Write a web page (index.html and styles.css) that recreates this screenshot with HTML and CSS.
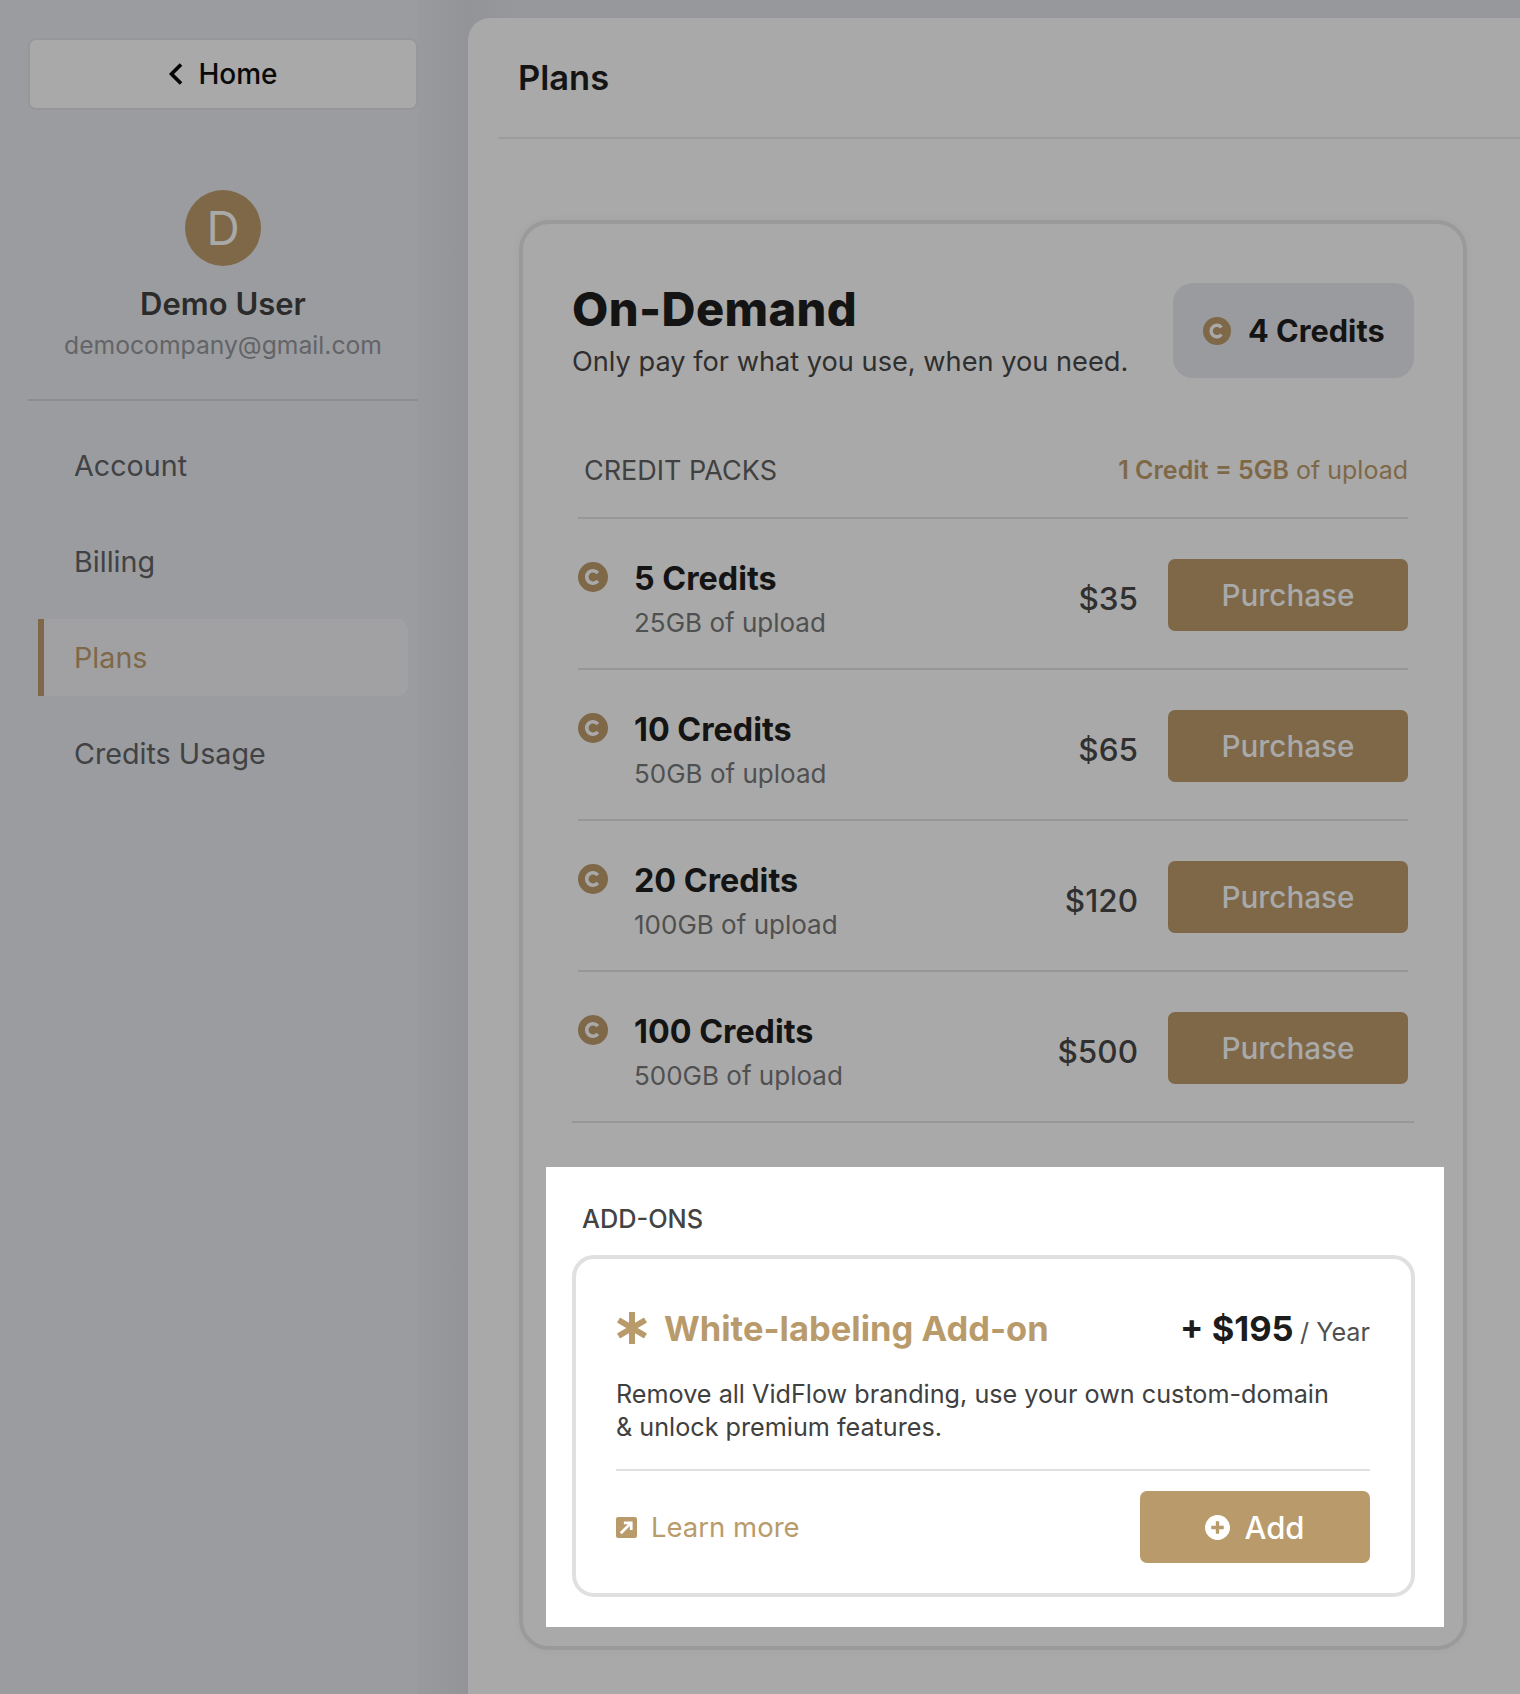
FILE: index.html
```html
<!DOCTYPE html>
<html lang="en">
<head>
    <meta charset="UTF-8">
    <title>Plans</title>
    <link rel="stylesheet" href="styles.css">
</head>
<body>
    <div class="app">
        <aside class="sidebar">
            <a class="home-btn">
                <svg width="16" height="24" viewBox="0 0 16 24"><path d="M13 2.500 3.500 12l9.500 9.500" fill="none" stroke="#050505" stroke-width="3.600"/></svg>
                Home
            </a>
            <div class="profile">
                <div class="avatar">D</div>
                <div class="profile-name">Demo User</div>
                <div class="profile-email">democompany@gmail.com</div>
            </div>
            <nav class="nav">
                <a class="nav-item">Account</a>
                <a class="nav-item">Billing</a>
                <a class="nav-item active">Plans</a>
                <a class="nav-item">Credits Usage</a>
            </nav>
        </aside>

        <main class="panel">
            <div class="panel-head"><h2>Plans</h2></div>
            <section class="card">
                <div class="card-head">
                    <div>
                        <h1>On-Demand</h1>
                        <p>Only pay for what you use, when you need.</p>
                    </div>
                    <div class="balance">
                        <svg class="coin" width="28" height="28" viewBox="0 0 30 30"><circle cx="15" cy="15" r="15" fill="#7e6848"/><path d="M19.800 11.200a6.200 6.200 0 1 0 0 7.600" fill="none" stroke="#a9a9a9" stroke-width="3.600"/></svg>
                        <span>4 Credits</span>
                    </div>
                </div>

                <div class="packs">
                    <div class="packs-head">
                        <span class="packs-label">CREDIT PACKS</span>
                        <span class="packs-rate"><b>1 Credit = 5GB</b> of upload</span>
                    </div>
                    <div class="pack">
                        <svg class="coin" width="30" height="30" viewBox="0 0 30 30"><circle cx="15" cy="15" r="15" fill="#7e6848"/><path d="M19.800 11.200a6.200 6.200 0 1 0 0 7.600" fill="none" stroke="#a9a9a9" stroke-width="3.600"/></svg>
                        <div class="pack-info">
                            <div class="pack-name">5 Credits</div>
                            <div class="pack-sub">25GB of upload</div>
                        </div>
                        <div class="pack-price">$35</div>
                        <button class="buy">Purchase</button>
                    </div>
                    <div class="pack">
                        <svg class="coin" width="30" height="30" viewBox="0 0 30 30"><circle cx="15" cy="15" r="15" fill="#7e6848"/><path d="M19.800 11.200a6.200 6.200 0 1 0 0 7.600" fill="none" stroke="#a9a9a9" stroke-width="3.600"/></svg>
                        <div class="pack-info">
                            <div class="pack-name">10 Credits</div>
                            <div class="pack-sub">50GB of upload</div>
                        </div>
                        <div class="pack-price">$65</div>
                        <button class="buy">Purchase</button>
                    </div>
                    <div class="pack">
                        <svg class="coin" width="30" height="30" viewBox="0 0 30 30"><circle cx="15" cy="15" r="15" fill="#7e6848"/><path d="M19.800 11.200a6.200 6.200 0 1 0 0 7.600" fill="none" stroke="#a9a9a9" stroke-width="3.600"/></svg>
                        <div class="pack-info">
                            <div class="pack-name">20 Credits</div>
                            <div class="pack-sub">100GB of upload</div>
                        </div>
                        <div class="pack-price">$120</div>
                        <button class="buy">Purchase</button>
                    </div>
                    <div class="pack last">
                        <svg class="coin" width="30" height="30" viewBox="0 0 30 30"><circle cx="15" cy="15" r="15" fill="#7e6848"/><path d="M19.800 11.200a6.200 6.200 0 1 0 0 7.600" fill="none" stroke="#a9a9a9" stroke-width="3.600"/></svg>
                        <div class="pack-info">
                            <div class="pack-name">100 Credits</div>
                            <div class="pack-sub">500GB of upload</div>
                        </div>
                        <div class="pack-price">$500</div>
                        <button class="buy">Purchase</button>
                    </div>
                </div>

                <div class="addons">
                    <div class="addons-label">ADD-ONS</div>
                    <div class="addon">
                        <div class="addon-head">
                            <svg width="32" height="32" viewBox="0 0 32 32"><path d="M16 0v32M2.500 8l27 16M29.500 8l-27 16" fill="none" stroke="#b99b6b" stroke-width="6"/></svg>
                            <h3>White-labeling Add-on</h3>
                            <div class="addon-price"><b>+ $195</b> <span>/ Year</span></div>
                        </div>
                        <p class="addon-desc">Remove all VidFlow branding, use your own custom-domain<br>&amp; unlock premium features.</p>
                        <div class="addon-foot">
                            <a class="learn">
                                <svg width="21" height="21" viewBox="0 0 20 20"><rect width="20" height="20" rx="2" fill="#b99b6b"/><path d="M4.500 15.500 13 7M7.500 5.500h7V12.500" fill="none" stroke="#fff" stroke-width="2.600"/></svg>
                                Learn more
                            </a>
                            <button class="add">
                                <svg width="25" height="25" viewBox="0 0 24 24"><circle cx="12" cy="12" r="12" fill="#fff"/><path d="M12 6v12M6 12h12" stroke="#b99b6b" stroke-width="3.200"/></svg>
                                Add
                            </button>
                        </div>
                    </div>
                </div>
            </section>
        </main>
    </div>
</body>
</html>
```

FILE: styles.css
```css
/* page */
* {
    box-sizing: border-box;
}

body {
    margin: 0;
    height: 1694px;
    overflow: hidden;
    font-family: "Inter", "Liberation Sans", sans-serif;
    color: #141414;
}

.app {
    display: flex;
    height: 1694px;
    background: linear-gradient(90deg, #999a9d 418px, #939497 468px, #97989c 520px);
}

/* sidebar */
.sidebar {
    flex: 0 0 418px;
    margin-right: 50px;
    padding: 38px 0 0 28px;
    background: #9b9c9f;
}

.home-btn {
    display: flex;
    align-items: center;
    justify-content: center;
    gap: 14px;
    width: 390px;
    height: 72px;
    background: #a9a9a9;
    border: 2px solid #97979a;
    border-radius: 8px;
    font-size: 28px;
    font-weight: 500;
    color: #0a0a0a;
}

.profile {
    display: flex;
    flex-direction: column;
    align-items: center;
    height: 291px;
    padding-top: 80px;
    border-bottom: 2px solid #8b8c8f;
}

.avatar {
    display: flex;
    align-items: center;
    justify-content: center;
    width: 76px;
    height: 76px;
    border-radius: 50%;
    background: #7e6848;
    color: #a9a9a9;
    font-size: 46px;
}

.profile-name {
    margin-top: 19px;
    font-size: 31px;
    font-weight: 600;
    color: #2b2b2b;
}

.profile-email {
    margin-top: 8px;
    font-size: 24.700px;
    color: #636467;
}

.nav {
    display: flex;
    flex-direction: column;
    gap: 19px;
    margin-top: 26px;
    margin-left: 10px;
    width: 370px;
}

.nav-item {
    height: 77px;
    line-height: 77px;
    padding-left: 30px;
    font-size: 28.700px;
    color: #414244;
    border-left: 6px solid transparent;
}

.nav-item.active {
    color: #7e6848;
    background: #a1a1a3;
    border-left-color: #7e6848;
    border-radius: 0 10px 10px 0;
}

/* main panel */
.panel {
    flex: 1;
    min-width: 0;
    margin-top: 18px;
    padding-left: 30px;
    background: #a9a9a9;
    border-top-left-radius: 22px;
}

.panel-head {
    height: 121px;
    padding: 38px 0 0 20px;
    border-bottom: 2px solid #9d9d9d;
}

.panel-head h2 {
    margin: 0;
    font-size: 34.500px;
    font-weight: 600;
    line-height: 44px;
    color: #141414;
}

.card {
    width: 948px;
    height: 1430px;
    margin: 81px 0 0 21px;
    padding: 50px 49px 0;
    border: 4px solid #9a9a9a;
    border-radius: 30px;
    box-shadow: 0 0 8px rgba(0, 0, 0, 0.04);
}

.card-head {
    display: flex;
    justify-content: space-between;
    align-items: flex-start;
    height: 157px;
    padding-top: 9px;
}

.card-head h1 {
    margin: 0;
    font-size: 47px;
    font-weight: 800;
    line-height: 52px;
    letter-spacing: 0.4px;
    color: #141414;
}

.card-head p {
    margin: 10px 0 0;
    font-size: 27.200px;
    line-height: 34px;
    color: #2f2f2f;
}

.balance {
    display: flex;
    align-items: center;
    gap: 17px;
    width: 241px;
    height: 95px;
    padding-left: 30px;
    background: #9a9b9f;
    border-radius: 20px;
    font-size: 30.700px;
    font-weight: 700;
    white-space: nowrap;
}

/* credit packs */
.packs {
    margin: 0 6px;
}

.packs-head {
    display: flex;
    justify-content: space-between;
    align-items: center;
    height: 70px;
    margin-top: 18px;
    padding-left: 6px;
    border-bottom: 2px solid #979797;
    padding-bottom: 26px;
}

.packs-label {
    font-size: 27px;
    color: #414141;
}

.packs-rate {
    font-size: 25px;
    color: #7e6848;
}

.packs-rate b {
    font-weight: 600;
}

.pack {
    display: flex;
    align-items: flex-start;
    height: 151px;
    padding-top: 40px;
    border-bottom: 2px solid #979797;
}

.pack.last {
    margin: 0 -6px;
    padding: 40px 6px 0;
}

.pack .coin {
    margin-top: 3px;
    flex: none;
}

.pack-info {
    flex: 1;
    margin-left: 26px;
}

.pack-name {
    font-size: 32.300px;
    font-weight: 700;
    line-height: 40px;
    color: #141414;
}

.pack-sub {
    margin-top: 5px;
    font-size: 26px;
    line-height: 38px;
    color: #505050;
}

.pack-price {
    margin: 20px 30px 0 0;
    font-size: 31.500px;
    font-weight: 500;
    line-height: 40px;
    color: #303030;
}

.buy {
    width: 240px;
    height: 72px;
    border: none;
    border-radius: 7px;
    background: #7e6848;
    color: #a9a9a9;
    font-family: inherit;
    font-size: 29.700px;
    font-weight: 500;
}

/* add-ons, the one part not dimmed */
.addons {
    width: 898px;
    height: 460px;
    margin: 44px -26px 0;
    padding: 34px 29px 0 26px;
    background: #fff;
}

.addons-label {
    margin-left: 10px;
    font-size: 25.300px;
    font-weight: 500;
    line-height: 36px;
    color: #434343;
}

.addon {
    height: 342px;
    margin-top: 18px;
    padding: 50px 41px 0 40px;
    border: 4px solid #e0e0e0;
    border-radius: 22px;
}

.addon-head {
    display: flex;
    align-items: center;
    height: 38px;
}

.addon-head h3 {
    flex: 1;
    margin: 0 0 0 16px;
    font-size: 34.500px;
    font-weight: 700;
    color: #b99b6b;
    white-space: nowrap;
}

.addon-price b {
    font-size: 34.500px;
    font-weight: 700;
    color: #1c1c1c;
}

.addon-price span {
    margin-left: 2px;
    font-size: 25.200px;
    color: #505050;
}

.addon-desc {
    margin: 31px 0 0;
    font-size: 25.200px;
    line-height: 33px;
    color: #404040;
}

.addon-foot {
    display: flex;
    justify-content: space-between;
    align-items: center;
    margin-top: 25px;
    padding-top: 20px;
    border-top: 2px solid #e0e0e0;
}

.learn {
    display: flex;
    align-items: center;
    gap: 14px;
    font-size: 27.500px;
    color: #b99b6b;
}

.add {
    display: flex;
    align-items: center;
    justify-content: center;
    gap: 14px;
    width: 230px;
    height: 72px;
    border: none;
    border-radius: 7px;
    background: #b99b6b;
    color: #fff;
    font-family: inherit;
    font-size: 31px;
    font-weight: 500;
}
```
